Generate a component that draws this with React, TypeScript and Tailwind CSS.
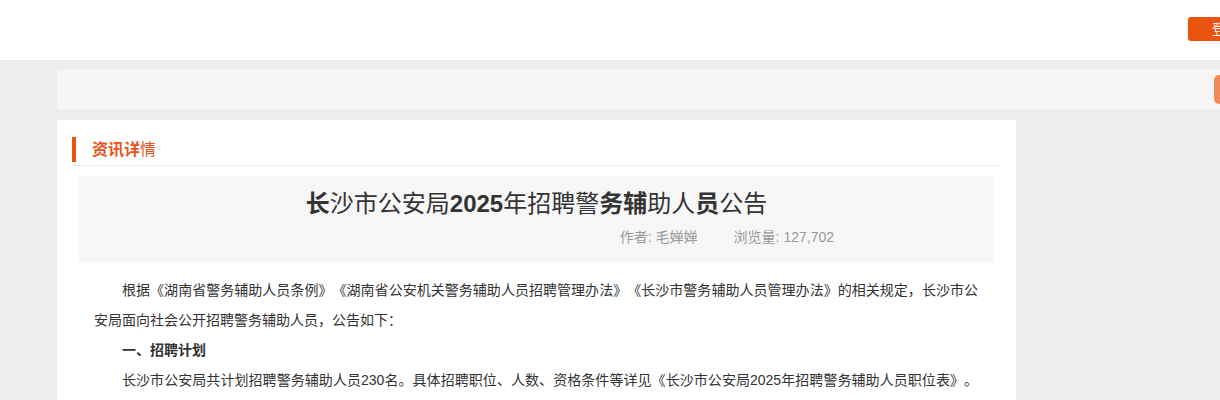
import React from 'react';

const font = { fontFamily: '"Liberation Sans", "Noto Sans CJK SC", sans-serif' };

function Header() {
  return (
    <header className="h-[60px] bg-white flex items-start pt-[17px] pl-[1188px]">
      <button className="shrink-0 h-[24px] px-[24px] bg-[#e9540f] text-white text-[14px] leading-[24px] rounded-[3px]">
        登录
      </button>
    </header>
  );
}

function ArticleTitle() {
  return (
    <div className="mt-[10px] mx-[22px] bg-[#f7f7f7] pt-[10px] pb-[15px]">
      <h1 className="text-center text-[24px] leading-[36px] text-[#333]">
        <b>长</b>沙市公安局<b>2025</b>年招聘警<b>务辅</b>助人<b>员</b>公告
      </h1>
      <div className="mt-[5px] flex justify-end gap-[36px] pr-[160px] text-[14px] leading-[20px] text-[#999]">
        <span>作者: 毛婵婵</span>
        <span>浏览量: 127,702</span>
      </div>
    </div>
  );
}

function ArticleBody() {
  return (
    <div className="mt-[13px] pl-[37px] pr-[38px] text-[14px] leading-[30px] text-[#333] text-justify [text-spacing-trim:space-all]">
      <p className="indent-[28px] [text-align-last:justify]">
        根据《湖南省警务辅助人员条例》《湖南省公安机关警务辅助人员招聘管理办法》《长沙市警务辅助人员管理办法》的相关规定，长沙市公
      </p>
      <p>安局面向社会公开招聘警务辅助人员，公告如下：</p>
      <p className="indent-[28px] font-bold">一、招聘计划</p>
      <p className="indent-[28px] [text-align-last:justify]">
        长沙市公安局共计划招聘警务辅助人员230名。具体招聘职位、人数、资格条件等详见《长沙市公安局2025年招聘警务辅助人员职位表》。
      </p>
    </div>
  );
}

export default function App() {
  return (
    <div className="w-[1220px] h-[400px] overflow-hidden bg-[#eeecec]" style={font}>
      <div className="w-[1300px]">
        <Header />
        <main className="pt-[10px] pl-[57px]">
          <div className="h-[39px] w-[1220px] bg-[#f6f6f6] flex items-center pl-[1157px]">
            <span className="shrink-0 w-[40px] h-[29px] rounded-[5px] bg-[#f08a5b]" />
          </div>
          <section className="mt-[11px] w-[959px] h-[400px] bg-white pt-[17px]">
            <div className="mx-[15px] flex items-start border-b border-[#eeeeee] pb-[3px]">
              <span className="w-[4px] h-[25px] bg-[#e9540f]" />
              <h2 className="ml-[16px] text-[16px] leading-[25px] text-[#e6531d]">
                <b>资讯详</b>情
              </h2>
            </div>
            <ArticleTitle />
            <ArticleBody />
          </section>
        </main>
      </div>
    </div>
  );
}
